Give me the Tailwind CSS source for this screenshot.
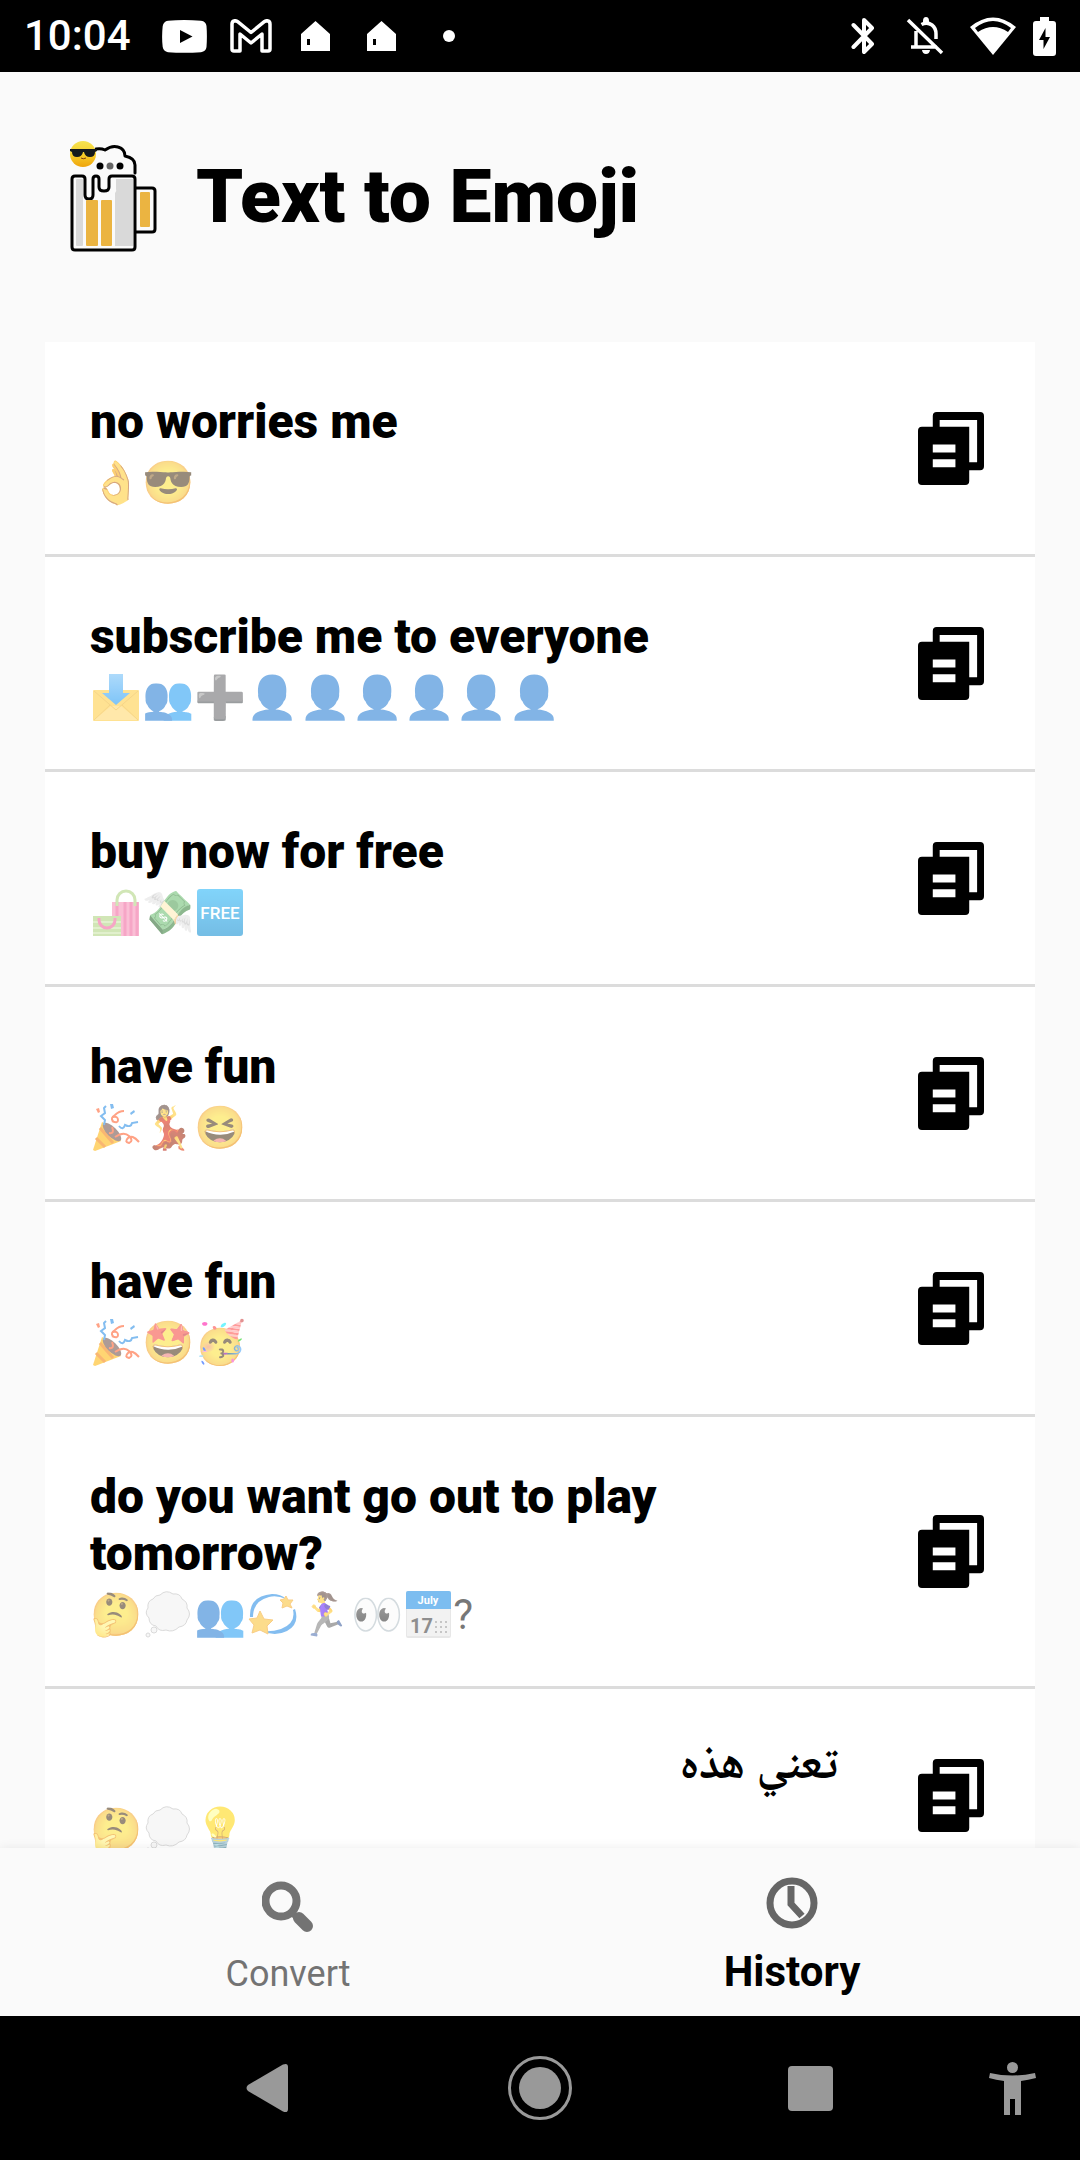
<!DOCTYPE html>
<html lang="en">
<head>
    <meta charset="UTF-8">
    <meta name="viewport" content="width=device-width, initial-scale=1.0">
    <title>Text to Emoji</title>
    <script src="https://cdn.jsdelivr.net/npm/@tailwindcss/browser@4"></script>
    <style>
        body {
            font-family: Roboto, 'Noto Naskh Arabic', 'Noto Sans Arabic', 'Noto Color Emoji', sans-serif;
        }
    </style>
</head>
<body class="h-screen flex flex-col bg-[#fafafa] text-black overflow-hidden">
    <!-- shared icons -->
    <svg class="absolute size-0">
        <defs>
            <linearGradient id="face" x1="0" y1="0" x2="0" y2="1">
                <stop offset="0" stop-color="#f5e352"/><stop offset=".5" stop-color="#f7cf2c"/><stop offset="1" stop-color="#efa40c"/>
            </linearGradient>
            <linearGradient id="arrow" x1="0" y1="0" x2="0" y2="1">
                <stop offset="0" stop-color="#6cbdf8"/><stop offset="1" stop-color="#1595f3"/>
            </linearGradient>
            <linearGradient id="sky" x1="0" y1="0" x2="0" y2="1">
                <stop offset="0" stop-color="#1cb2f8"/><stop offset="1" stop-color="#0488d0"/>
            </linearGradient>
        </defs>
        <symbol id="copy" viewBox="0 0 67 74">
            <path fill-rule="evenodd" d="M19 0h44a4 4 0 0 1 4 4v51a4 4 0 0 1-4 4H52v11a4 4 0 0 1-4 4H4a4 4 0 0 1-4-4V19a4 4 0 0 1 4-4h11V4a4 4 0 0 1 4-4zM22 8v7h30v36h8V8zM15 33v8h23v-8zM15 48v8h23v-8z"/>
        </symbol>
        <symbol id="house" viewBox="0 0 29 30">
            <path fill-rule="evenodd" d="M14.500 0L29 13v17H0V13zM6 18v6h3v-6z"/>
        </symbol>
        <symbol id="inbox" viewBox="0 0 52 47">
            <rect x="3" y="16" width="46" height="31" rx="1" fill="#ffcb3a"/>
            <path fill="#ffd765" d="M4 46l17-14h10l17 14z"/>
            <path fill="none" stroke="#f0b429" d="M4 17l22 19 22-19M4 46l16-15M48 46L32 31"/>
            <path fill="url(#arrow)" d="M19 0h14v19h7L26 31 12 19h7z"/>
        </symbol>
        <symbol id="bags" viewBox="0 0 52 47">
            <rect x="22" y="13" width="27" height="34" fill="#f68cb4"/>
            <path stroke="#f05e99" stroke-width="3" d="M27 13v34M35 13v34M41 13v34M47 13v34"/>
            <path fill="none" stroke="#acd37c" stroke-width="3" d="M27 17V11a9 9 0 0 1 18 0v6"/>
            <rect x="3" y="27" width="28" height="20" fill="#acd37c"/>
            <path stroke="#c9e4a6" stroke-width="2" d="M3 33h28M3 39h28M3 44h28"/>
            <path fill="none" stroke="#f05e99" stroke-width="3" d="M9 29v2a8 8 0 0 0 16 0v-2"/>
        </symbol>
        <symbol id="party" viewBox="0 0 52 47">
            <path fill="#ffb300" d="M3 46l9-28q12 5 19 19L5 47z"/>
            <path fill="none" stroke="#f57c00" stroke-width="3" d="M10 24l13 15M6 34l9 9"/>
            <ellipse cx="22" cy="28" rx="5" ry="12" transform="rotate(-45 22 28)" fill="#6b4a43"/>
            <g fill="none" stroke-width="2">
                <path stroke="#ff5722" d="M19 29q6 1 3-6M23 17q-3-3 2-6 4-4 9-4M22 17q6 3 6-1t-5-3M25 33q9-6 14-1t0 7q-5-1-1-5t11 4"/>
                <path stroke="#1e88e5" d="M14 21l1-5-4-4 4-3-1-5 2-2M29 22q4 5 6-1 6 3 7-2l6-1"/>
            </g>
            <path fill="#1e88e5" d="M20 0l3 0 1 4-3 1zM40 9l4-3 1 2-4 3z"/><path fill="#ff5722" d="M6 5l3-1 1 4-2 1z"/>
        </symbol>
        <symbol id="thought" viewBox="0 0 52 47">
            <g fill="#f1f1f1" stroke="#bdbdbd">
                <path d="M18 4q6-6 13-1 7-1 9 5 6 3 5 9 5 6 0 12-1 6-8 7-6 6-13 3-7 2-10-4-7-1-7-8-5-5-1-10-1-7 5-9 2-4 7-4z"/>
                <circle cx="12" cy="39" r="3"/><circle cx="6" cy="44" r="2"/>
            </g>
        </symbol>
        <symbol id="dizzy" viewBox="0 0 52 47">
            <path fill="#1e88e5" d="M3 26Q2 5 25 3q9 0 14 5Q30 4 22 6 6 10 6 26zM48 18q5 15-8 22-12 6-25 0 10 1 19-2 15-6 12-19z"/>
            <path fill="#fbc02d" stroke="#f5a623" stroke-linejoin="round" d="M13 20l4 8 9 1-6 6 1 8-8-4-8 3 2-8-5-6 8-1zM39 5l2 4 5 0-3 4 2 4-5-2-5 2 1-5-3-3 4-1z"/>
        </symbol>
    </svg>

    <!-- status bar -->
    <div class="h-[72px] shrink-0 bg-black text-white flex items-center justify-between px-6">
        <div class="flex items-center">
            <span class="text-[42px] leading-[48px] font-medium mr-[31px]">10:04</span>
            <svg class="w-[45px] h-[33px] mr-[23px]" viewBox="0 0 45 33" fill="#fff">
                <path fill-rule="evenodd" d="M6 .8Q22-.6 39 .8 44 1.500 44.500 6q.8 10 0 21-.5 4.500-5.500 5.200-17 1.200-33 0Q1.500 31.500.7 27q-1.200-10 0-21Q1.500 1.500 6 .8zM18 10v13l12.500-6.500z"/>
            </svg>
            <svg class="w-[42px] h-[34px] mr-[29px]" viewBox="0 0 42 34" fill="none" stroke="#fff" stroke-width="3.500" stroke-linejoin="round">
                <path d="M2 5q0-3 3-3.300 1.500 0 3 1.200l13 10.600L34 2.900q1.500-1.200 3-1.200 3 .3 3 3.300v25q0 2-2 2h-6V15L21 24 10 15v17H4q-2 0-2-2z"/>
            </svg>
            <svg class="w-[29px] h-[30px] mr-[37px]" fill="#fff"><use href="#house"/></svg>
            <svg class="w-[29px] h-[30px] mr-[47px]" fill="#fff"><use href="#house"/></svg>
            <span class="size-3 rounded-full bg-white"></span>
        </div>
        <div class="flex items-center">
            <svg class="w-[24px] h-[38px] mr-[31px]" viewBox="0 0 24 38" fill="none" stroke="#fff" stroke-width="4" stroke-linejoin="round" stroke-linecap="round">
                <path d="M2.500 8L21 27l-8 8V3l8 8L2.500 30"/>
            </svg>
            <svg class="w-[38px] h-[38px] mr-[26px]" viewBox="0 0 38 38" fill="none" stroke="#fff" stroke-width="3.500">
                <path d="M2 3l34 33M5 30h26M10 29V14M15.500 7.500Q21 4.500 26 8q4 3 4 9v5"/>
                <path fill="#fff" stroke="none" d="M17 4q0-4 3-4t3 4v2h-6zM16 33h8q-.5 4-4 4t-4-4z"/>
            </svg>
            <svg class="w-[46px] h-[38px] mr-[17px]" viewBox="0 0 46 38">
                <path fill="#fff" d="M0 10Q23-9 46 10L23 38z"/>
                <path fill="#000" d="M5 11Q23-3 41 11l-3 4Q23 5 8 15z"/>
            </svg>
            <svg class="w-[23px] h-[39px]" viewBox="0 0 23 39" fill="#fff">
                <path fill-rule="evenodd" d="M7 0h9v4h4q3 0 3 3v29q0 3-3 3H3q-3 0-3-3V7q0-3 3-3h4zM12.500 11L6 23h4.500v9L17 20h-4.500z"/>
            </svg>
        </div>
    </div>

    <header class="shrink-0 flex items-center pl-[70px] pt-[66px] pb-[89px]">
        <svg class="w-[88px] h-[115px] mr-[38px]" viewBox="0 0 88 115" fill="none">
            <g stroke="#000" stroke-width="3" stroke-linejoin="round" stroke-linecap="round">
                <path d="M26 11q5-1 9 1 7-5 13-3 7 2 7 9 10 2 10 9v8"/>
                <path d="M66 50h16q3 0 3 3v38q0 3-3 3H66"/>
                <path d="M5 38h7q3 0 3 3v16q0 4 4 4t4-4V41q0-3 3-3t3 3v8q0 4 5 4t5-4v-8q0-3 3-3h20q3 0 3 3v68q0 3-3 3H5q-3 0-3-3V41q0-3 3-3z"/>
            </g>
            <g fill="#d9d9d9"><rect x="6" y="41" width="7" height="67" rx="1"/><path d="M46 41h17v67H45V55q2-2 1-4z"/></g>
            <g fill="#ebb441"><rect x="16" y="62" width="12" height="46" rx="1"/><rect x="31" y="62" width="11" height="46" rx="1"/><rect x="70" y="54" width="10" height="35" rx="1"/></g>
            <circle cx="30" cy="28" r="3.500" fill="#000"/><circle cx="40" cy="28" r="3.500" fill="#666"/><circle cx="50" cy="28" r="3.500" fill="#000"/>
            <circle cx="13" cy="16" r="13" fill="url(#face)"/>
            <path fill="#15191d" d="M0 11h27v2l-2 1q0 5-5 5t-6-5h-1q-1 5-6 5t-5-5l-2-1z"/>
            <path stroke="#7a3d10" d="M11 20q2 1.500 5 0"/>
        </svg>
        <h1 class="text-[75px] leading-[88px] font-black">Text to Emoji</h1>
    </header>

    <main class="flex-1 min-h-0 overflow-hidden px-[45px]">
        <ul class="bg-white">
            <li class="flex items-center pl-[45px] pr-[51px] py-[51px] border-b-3 border-[#dcdcdc]">
                <div class="flex-1 mr-20">
                    <h2 class="text-[48px] leading-[57px] font-black">no worries me</h2>
                    <p class="flex text-[42px] leading-[53px] h-[47px] mt-[6px] text-black/54">👌😎</p>
                </div>
                <button aria-label="Copy"><svg class="w-[66px] h-[73px]"><use href="#copy"/></svg></button>
            </li>
            <li class="flex items-center pl-[45px] pr-[51px] py-[51px] border-b-3 border-[#dcdcdc]">
                <div class="flex-1 mr-20">
                    <h2 class="text-[48px] leading-[57px] font-black">subscribe me to everyone</h2>
                    <p class="flex text-[42px] leading-[53px] h-[47px] mt-[6px] text-black/54">
                        <svg class="w-[52px] h-[47px] mt-[3px] opacity-55" role="img" aria-label="📩"><use href="#inbox"/></svg>
                        <span>👥➕👤👤👤👤👤👤</span>
                    </p>
                </div>
                <button aria-label="Copy"><svg class="w-[66px] h-[73px]"><use href="#copy"/></svg></button>
            </li>
            <li class="flex items-center pl-[45px] pr-[51px] py-[51px] border-b-3 border-[#dcdcdc]">
                <div class="flex-1 mr-20">
                    <h2 class="text-[48px] leading-[57px] font-black">buy now for free</h2>
                    <p class="flex text-[42px] leading-[53px] h-[47px] mt-[6px] text-black/54">
                        <svg class="w-[52px] h-[47px] mt-[3px] opacity-55" role="img" aria-label="🛍️"><use href="#bags"/></svg>
                        <span>💸</span>
                        <svg class="w-[52px] h-[47px] mt-[3px] opacity-55" viewBox="0 0 52 47" role="img" aria-label="🆓">
                            <rect x="3" y="0" width="46" height="47" rx="3" fill="url(#sky)"/>
                            <text x="26" y="30" text-anchor="middle" font-size="17" font-weight="500" fill="#fff">FREE</text>
                        </svg>
                    </p>
                </div>
                <button aria-label="Copy"><svg class="w-[66px] h-[73px]"><use href="#copy"/></svg></button>
            </li>
            <li class="flex items-center pl-[45px] pr-[51px] py-[51px] border-b-3 border-[#dcdcdc]">
                <div class="flex-1 mr-20">
                    <h2 class="text-[48px] leading-[57px] font-black">have fun</h2>
                    <p class="flex text-[42px] leading-[53px] h-[47px] mt-[6px] text-black/54">
                        <svg class="w-[52px] h-[47px] mt-[3px] opacity-55" role="img" aria-label="🎉"><use href="#party"/></svg>
                        <span>💃😆</span>
                    </p>
                </div>
                <button aria-label="Copy"><svg class="w-[66px] h-[73px]"><use href="#copy"/></svg></button>
            </li>
            <li class="flex items-center pl-[45px] pr-[51px] py-[51px] border-b-3 border-[#dcdcdc]">
                <div class="flex-1 mr-20">
                    <h2 class="text-[48px] leading-[57px] font-black">have fun</h2>
                    <p class="flex text-[42px] leading-[53px] h-[47px] mt-[6px] text-black/54">
                        <svg class="w-[52px] h-[47px] mt-[3px] opacity-55" role="img" aria-label="🎉"><use href="#party"/></svg>
                        <span>🤩🥳</span>
                    </p>
                </div>
                <button aria-label="Copy"><svg class="w-[66px] h-[73px]"><use href="#copy"/></svg></button>
            </li>
            <li class="flex items-center pl-[45px] pr-[51px] py-[51px] border-b-3 border-[#dcdcdc]">
                <div class="flex-1 mr-20">
                    <h2 class="text-[48px] leading-[57px] font-black">do you want go out to play tomorrow?</h2>
                    <p class="flex text-[42px] leading-[53px] h-[47px] mt-[6px] text-black/54">
                        <span>🤔</span>
                        <svg class="w-[52px] h-[47px] mt-[3px] opacity-55" role="img" aria-label="💭"><use href="#thought"/></svg>
                        <span>👥</span>
                        <svg class="w-[52px] h-[47px] mt-[3px] opacity-55" role="img" aria-label="💫"><use href="#dizzy"/></svg>
                        <span>🏃‍♀️👀</span>
                        <svg class="w-[50px] h-[47px] mt-[3px] opacity-55" viewBox="1 0 50 47" role="img" aria-label="📅">
                            <rect x="4" y="0" width="45" height="47" rx="2" fill="#d5d5d5"/>
                            <rect x="5" y="18" width="43" height="27" fill="#e8e8e8"/>
                            <path fill="#1288e5" d="M4 18V2q0-2 2-2h41q2 0 2 2v16z"/>
                            <text x="26" y="13" text-anchor="middle" font-size="11" font-weight="700" fill="#fff">July</text>
                            <text x="8" y="42" font-size="20" font-weight="700" fill="#333">17</text>
                            <path fill="none" stroke="#999" stroke-width="2" stroke-dasharray="2 3" d="M33 31h13M33 36h13M33 41h13"/>
                        </svg>
                        <span>?</span>
                    </p>
                </div>
                <button aria-label="Copy"><svg class="w-[66px] h-[73px]"><use href="#copy"/></svg></button>
            </li>
            <li class="flex items-center pl-[45px] pr-[51px] py-[51px] border-b-3 border-[#dcdcdc]">
                <div class="flex-1 mr-20">
                    <h2 class="text-[46px] leading-[45px] pb-3 font-bold" dir="rtl" lang="ar">تعني هذه</h2>
                    <p class="flex text-[42px] leading-[53px] h-[47px] mt-[6px] text-black/54">
                        <span>🤔</span>
                        <svg class="w-[52px] h-[47px] mt-[3px] opacity-55" role="img" aria-label="💭"><use href="#thought"/></svg>
                        <span>💡</span>
                    </p>
                </div>
                <button aria-label="Copy"><svg class="w-[66px] h-[73px]"><use href="#copy"/></svg></button>
            </li>
        </ul>
    </main>

    <!-- tabs -->
    <nav class="relative h-[168px] shrink-0 px-9 grid grid-cols-2 bg-[#fafafa] shadow-[0_0_10px_rgba(0,0,0,0.08)]">
        <a href="#" class="flex flex-col items-center pt-[33px] text-[#737373]">
            <svg class="size-[52px] mb-5" viewBox="0 0 52 52" fill="none" stroke="#737373">
                <circle cx="19" cy="20" r="15.500" stroke-width="8"/>
                <path d="M29 31l6 6" stroke-width="6"/>
                <path d="M37 37l8 8" stroke-width="12" stroke-linecap="round"/>
            </svg>
            <span class="text-[36px] leading-[42px]">Convert</span>
        </a>
        <a href="#" class="flex flex-col items-center pt-[29px]">
            <svg class="size-[52px] mb-[18px]" viewBox="0 0 52 52" fill="none" stroke="#666">
                <circle cx="26" cy="26" r="22" stroke-width="7"/>
                <path d="M25 9v18l11 12" stroke-width="7"/>
            </svg>
            <span class="text-[42px] leading-[49px] font-bold">History</span>
        </a>
    </nav>

    <!-- system navigation -->
    <div class="relative h-[144px] shrink-0 bg-black grid grid-cols-[1fr_auto_1fr] items-center">
        <div class="flex justify-end pr-[220px]">
            <button aria-label="Back"><svg class="w-[42px] h-[50px]" viewBox="0 0 42 50" fill="#999"><path d="M2 22L37 1.500Q42-.5 42 4v42q0 4.500-5 2.500L2 28q-3-3 0-6z"/></svg></button>
        </div>
        <button aria-label="Home"><svg class="size-[64px]" viewBox="0 0 64 64"><circle cx="32" cy="32" r="30.500" fill="none" stroke="#999" stroke-width="3"/><circle cx="32" cy="32" r="21" fill="#999"/></svg></button>
        <div class="flex justify-between items-center pl-[216px] pr-[44px]">
            <button aria-label="Recent apps" class="size-[45px] rounded bg-[#999]"></button>
            <button aria-label="Accessibility"><svg class="w-[47px] h-[53px]" viewBox="0 0 47 53" fill="#999"><circle cx="23.500" cy="5.500" r="5.500"/><path d="M1 11q22 5 45 0l1 5q-8 2-15 3v34h-6V37h-5v16h-6V19q-8-1-15-3z"/></svg></button>
        </div>
    </div>
</body>
</html>
